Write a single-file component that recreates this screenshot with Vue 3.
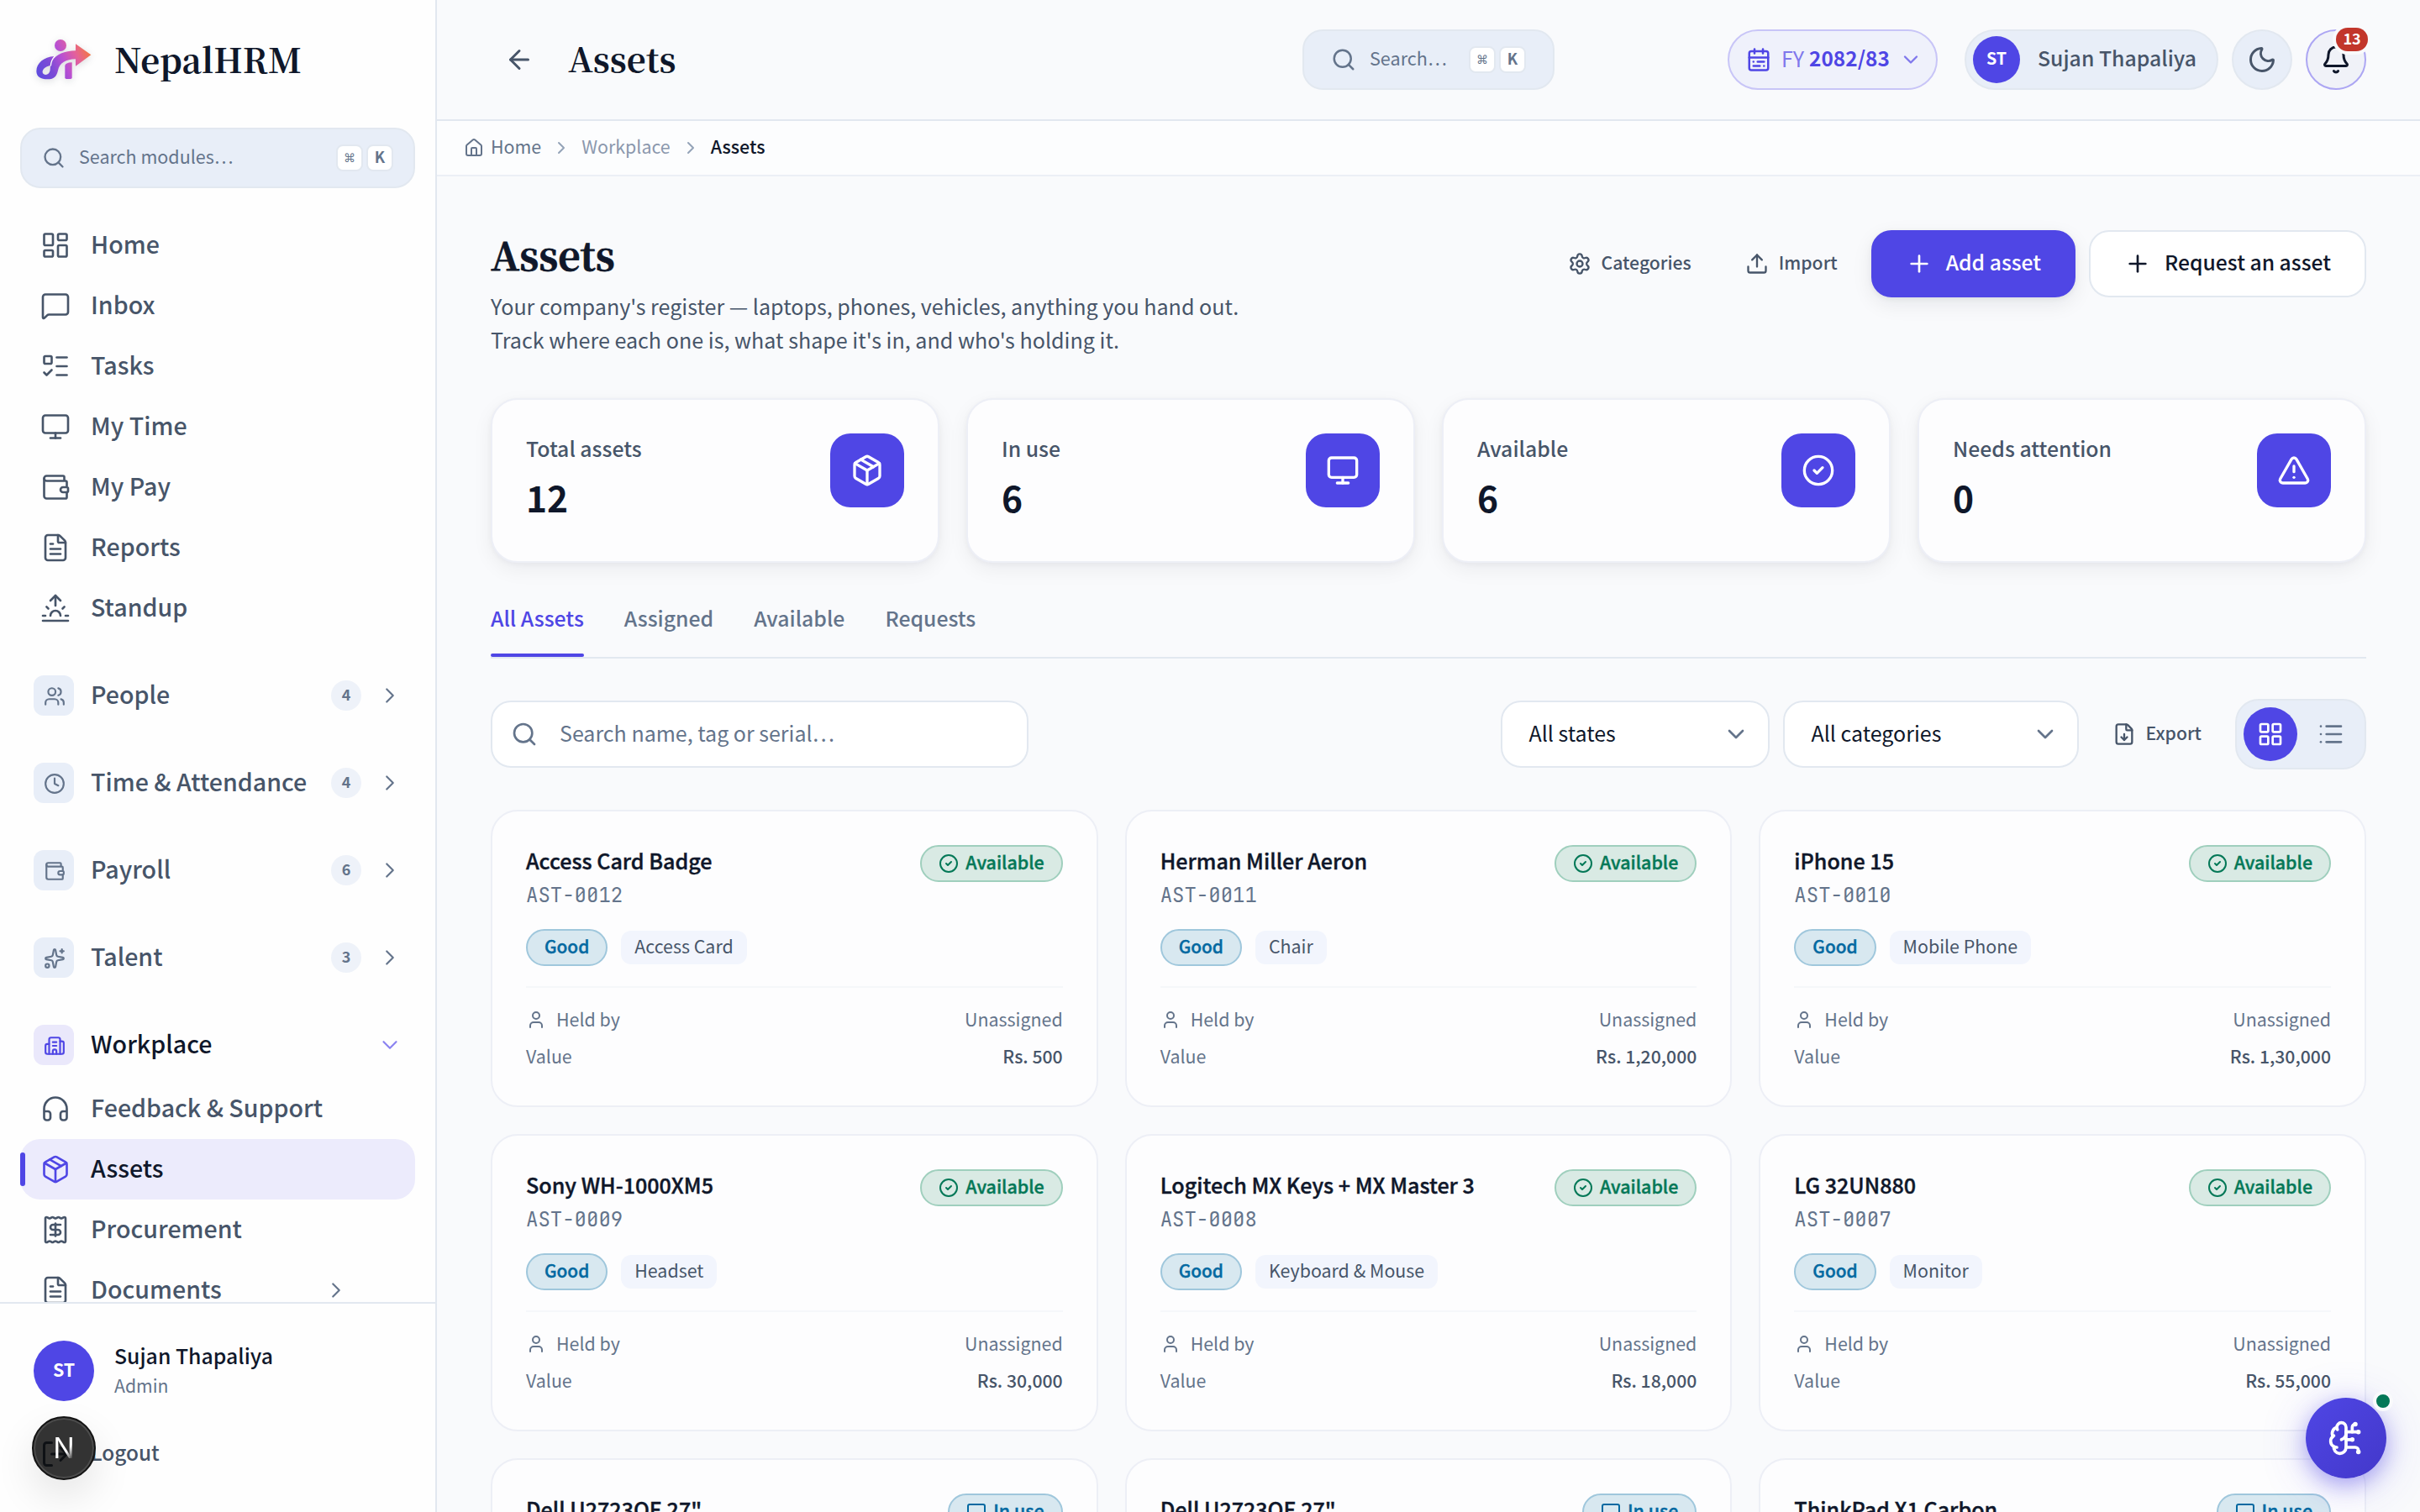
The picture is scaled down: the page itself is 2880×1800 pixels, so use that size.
<template>
  <div class="layout">
    <aside class="sidebar">
      <div class="brand">
        <svg class="logo" viewBox="30 28 216 168">
          <defs>
            <linearGradient id="logoFill" x1="40" y1="170" x2="235" y2="80" gradientUnits="userSpaceOnUse">
              <stop offset="0" stop-color="#5b4be0" />
              <stop offset="0.28" stop-color="#7a4bd6" />
              <stop offset="0.52" stop-color="#b84fd3" />
              <stop offset="0.75" stop-color="#e4619a" />
              <stop offset="1" stop-color="#f4793c" />
            </linearGradient>
          </defs>
          <circle cx="126" cy="58" r="21" fill="url(#logoFill)" />
          <path
            d="M104 97C66 99 40 122 40 150C40 170 56 179 79 179C105 179 113 166 117 147C123 120 145 108 180 107V132L235 92L180 53V77C140 77 110 92 97 112Z M91 130C71 133 60 145 62 155C65 166 80 166 86 155C91 146 88 138 91 130Z"
            fill="url(#logoFill)"
            fill-rule="evenodd"
          />
          <path d="M106 96C97 106 92 117 91 131" stroke="#fff" stroke-width="4" fill="none" />
          <path d="M142 131Q143 120 167 119V173Q167 178 162 178H147Q142 178 142 173Z" fill="url(#logoFill)" />
        </svg>
        <span class="brand-name">NepalHRM</span>
      </div>

      <div class="module-search">
        <svg class="icon" viewBox="0 0 24 24" v-html="icons.search"></svg>
        <span class="tx">Search modules…</span>
        <kbd class="cmd">⌘</kbd>
        <kbd><span class="tx">K</span></kbd>
      </div>

      <nav class="nav">
        <a v-for="item in mainNav" :key="item.label" class="nav-item">
          <svg class="icon" viewBox="0 0 24 24" v-html="icons[item.icon]"></svg>
          <span class="tx">{{ item.label }}</span>
        </a>

        <div v-for="group in groups" :key="group.label" class="group" :class="{ open: group.open }">
          <div class="group-head">
            <span class="tile">
              <svg class="icon" viewBox="0 0 24 24" v-html="icons[group.icon]"></svg>
            </span>
            <span class="tx label">{{ group.label }}</span>
            <span v-if="!group.open" class="count"><span class="tx">{{ group.count }}</span></span>
            <svg class="icon chev" viewBox="0 0 24 24" v-html="group.open ? icons.chevronDown : icons.chevronRight"></svg>
          </div>
          <a v-for="item in group.items" :key="item.label" class="nav-item" :class="{ active: item.active }">
            <svg class="icon" viewBox="0 0 24 24" v-html="icons[item.icon]"></svg>
            <span class="tx label">{{ item.label }}</span>
            <svg v-if="item.more" class="icon more" viewBox="0 0 24 24" v-html="icons.chevronRight"></svg>
          </a>
        </div>
      </nav>

      <div class="account">
        <div class="account-user">
          <span class="avatar"><span class="tx">ST</span></span>
          <div>
            <div class="account-name">Sujan Thapaliya</div>
            <div class="account-role">Admin</div>
          </div>
        </div>
        <div class="logout">
          <svg class="icon" viewBox="0 0 24 24" v-html="icons.logout"></svg>
          <span class="tx">Logout</span>
        </div>
      </div>
    </aside>

    <div class="content">
      <header class="topbar">
        <div class="topbar-left">
          <svg class="icon" viewBox="0 0 24 24" v-html="icons.arrowLeft"></svg>
          <span class="topbar-title">Assets</span>
        </div>
        <div class="top-search">
          <svg class="icon" viewBox="0 0 24 24" v-html="icons.search"></svg>
          <span class="tx">Search…</span>
          <kbd class="cmd">⌘</kbd>
          <kbd><span class="tx">K</span></kbd>
        </div>
        <div class="fiscal">
          <svg class="icon" viewBox="0 0 24 24" v-html="icons.calendar"></svg>
          <span class="tx fy">FY</span>
          <span class="tx year">2082/83</span>
          <svg class="icon chev" viewBox="0 0 24 24" v-html="icons.chevronDown"></svg>
        </div>
        <div class="user-pill">
          <span class="avatar small"><span class="tx">ST</span></span>
          <span class="tx">Sujan Thapaliya</span>
        </div>
        <div class="round">
          <svg class="icon" viewBox="0 0 24 24" v-html="icons.moon"></svg>
        </div>
        <div class="round bell">
          <svg class="icon" viewBox="0 0 24 24" v-html="icons.bell"></svg>
          <span class="bell-badge"><span class="tx">13</span></span>
        </div>
      </header>

      <div class="crumbs">
        <svg class="icon home" viewBox="0 0 24 24" v-html="icons.home"></svg>
        <span class="tx">Home</span>
        <svg class="icon sep" viewBox="0 0 24 24" v-html="icons.chevronRight"></svg>
        <span class="tx muted">Workplace</span>
        <svg class="icon sep" viewBox="0 0 24 24" v-html="icons.chevronRight"></svg>
        <span class="tx current">Assets</span>
      </div>

      <main class="page">
        <div class="page-head">
          <div class="page-intro">
            <h1>Assets</h1>
            <p>
              Your company's register — laptops, phones, vehicles, anything you hand out.<br />
              Track where each one is, what shape it's in, and who's holding it.
            </p>
          </div>
          <div class="actions">
            <button class="ghost">
              <svg class="icon" viewBox="0 0 24 24" v-html="icons.settings"></svg>
              <span class="tx">Categories</span>
            </button>
            <button class="ghost">
              <svg class="icon" viewBox="0 0 24 24" v-html="icons.upload"></svg>
              <span class="tx">Import</span>
            </button>
            <button class="btn primary">
              <svg class="icon" viewBox="0 0 24 24" v-html="icons.plus"></svg>
              <span class="tx">Add asset</span>
            </button>
            <button class="btn">
              <svg class="icon" viewBox="0 0 24 24" v-html="icons.plus"></svg>
              <span class="tx">Request an asset</span>
            </button>
          </div>
        </div>

        <div class="stats">
          <div v-for="stat in stats" :key="stat.label" class="stat">
            <div>
              <div class="stat-label"><span class="tx">{{ stat.label }}</span></div>
              <div class="stat-value"><span class="tx">{{ stat.value }}</span></div>
            </div>
            <span class="stat-tile">
              <svg class="icon" viewBox="0 0 24 24" v-html="icons[stat.icon]"></svg>
            </span>
          </div>
        </div>

        <div class="tabs">
          <span
            v-for="tab in tabs"
            :key="tab"
            class="tab"
            :class="{ selected: tab === activeTab }"
            @click="activeTab = tab"
          >
            <span class="tx">{{ tab }}</span>
          </span>
        </div>

        <div class="toolbar">
          <div class="field">
            <svg class="icon" viewBox="0 0 24 24" v-html="icons.search"></svg>
            <span class="tx">Search name, tag or serial…</span>
          </div>
          <div class="select states">
            <span class="tx">All states</span>
            <svg class="icon" viewBox="0 0 24 24" v-html="icons.chevronDown"></svg>
          </div>
          <div class="select categories">
            <span class="tx">All categories</span>
            <svg class="icon" viewBox="0 0 24 24" v-html="icons.chevronDown"></svg>
          </div>
          <button class="ghost">
            <svg class="icon" viewBox="0 0 24 24" v-html="icons.fileDown"></svg>
            <span class="tx">Export</span>
          </button>
          <div class="toggle">
            <span class="toggle-item on">
              <svg class="icon" viewBox="0 0 24 24" v-html="icons.grid"></svg>
            </span>
            <span class="toggle-item">
              <svg class="icon" viewBox="0 0 24 24" v-html="icons.list"></svg>
            </span>
          </div>
        </div>

        <div class="cards">
          <div v-for="(asset, index) in assets" :key="index" class="card">
            <div class="card-top">
              <div>
                <div class="card-name"><span class="tx">{{ asset.name }}</span></div>
                <div v-if="asset.tag" class="card-tag">{{ asset.tag }}</div>
              </div>
              <span class="status" :class="{ used: asset.used }">
                <svg class="icon" viewBox="0 0 24 24" v-html="asset.used ? icons.monitor : icons.check"></svg>
                <span class="tx">{{ asset.used ? 'In use' : 'Available' }}</span>
              </span>
            </div>
            <template v-if="asset.tag">
              <div class="card-chips">
                <span class="condition"><span class="tx">Good</span></span>
                <span class="category"><span class="tx">{{ asset.category }}</span></span>
              </div>
              <div class="card-rows">
                <div class="card-row">
                  <svg class="icon" viewBox="0 0 24 24" v-html="icons.user"></svg>
                  <span class="tx">Held by</span>
                  <span class="tx end">Unassigned</span>
                </div>
                <div class="card-row">
                  <span class="tx">Value</span>
                  <span class="tx end price">{{ asset.value }}</span>
                </div>
              </div>
            </template>
          </div>
        </div>
      </main>
    </div>

    <!-- floating buttons -->
    <div class="dev-badge"><span>N</span></div>
    <div class="assistant">
      <svg class="icon" viewBox="0 0 24 24" v-html="icons.brain"></svg>
      <span class="online"></span>
    </div>
  </div>
</template>

<script setup>
import { ref } from 'vue';

const file =
  '<path d="M6 22a2 2 0 0 1-2-2V4a2 2 0 0 1 2-2h8a2.4 2.4 0 0 1 1.704.706l3.588 3.588A2.4 2.4 0 0 1 20 8v12a2 2 0 0 1-2 2z"/><path d="M14 2v5a1 1 0 0 0 1 1h5"/>';

const icons = {
  search: '<circle cx="11" cy="11" r="8"/><path d="m21 21-4.34-4.34"/>',
  dashboard:
    '<rect width="7" height="9" x="3" y="3" rx="1"/><rect width="7" height="5" x="14" y="3" rx="1"/><rect width="7" height="9" x="14" y="12" rx="1"/><rect width="7" height="5" x="3" y="16" rx="1"/>',
  message:
    '<path d="M22 17a2 2 0 0 1-2 2H6.828a2 2 0 0 0-1.414.586l-2.202 2.202A.71.71 0 0 1 2 21.286V5a2 2 0 0 1 2-2h16a2 2 0 0 1 2 2z"/>',
  todo: '<path d="M13 5h8"/><path d="M13 12h8"/><path d="M13 19h8"/><path d="m3 17 2 2 4-4"/><rect x="3" y="4" width="6" height="6" rx="1"/>',
  monitor: '<rect width="20" height="14" x="2" y="3" rx="2"/><path d="M8 21h8"/><path d="M12 17v4"/>',
  wallet:
    '<path d="M19 7V4a1 1 0 0 0-1-1H5a2 2 0 0 0 0 4h15a1 1 0 0 1 1 1v4h-3a2 2 0 0 0 0 4h3a1 1 0 0 0 1-1v-2a1 1 0 0 0-1-1"/><path d="M3 5v14a2 2 0 0 0 2 2h15a1 1 0 0 0 1-1v-4"/>',
  fileText: file + '<path d="M10 9H8"/><path d="M16 13H8"/><path d="M16 17H8"/>',
  fileDown: file + '<path d="M12 18v-6"/><path d="m9 15 3 3 3-3"/>',
  sunrise:
    '<path d="M12 2v8"/><path d="m4.93 10.93 1.41 1.41"/><path d="M2 18h2"/><path d="M20 18h2"/><path d="m19.07 10.93-1.41 1.41"/><path d="M22 22H2"/><path d="m8 6 4-4 4 4"/><path d="M16 18a4 4 0 0 0-8 0"/>',
  users:
    '<path d="M16 21v-2a4 4 0 0 0-4-4H6a4 4 0 0 0-4 4v2"/><path d="M16 3.128a4 4 0 0 1 0 7.744"/><path d="M22 21v-2a4 4 0 0 0-3-3.87"/><circle cx="9" cy="7" r="4"/>',
  clock: '<circle cx="12" cy="12" r="10"/><path d="M12 6v6l4 2"/>',
  sparkles:
    '<path d="M11.017 2.814a1 1 0 0 1 1.966 0l1.051 5.558a2 2 0 0 0 1.594 1.594l5.558 1.051a1 1 0 0 1 0 1.966l-5.558 1.051a2 2 0 0 0-1.594 1.594l-1.051 5.558a1 1 0 0 1-1.966 0l-1.051-5.558a2 2 0 0 0-1.594-1.594l-5.558-1.051a1 1 0 0 1 0-1.966l5.558-1.051a2 2 0 0 0 1.594-1.594z"/><path d="M20 2v4"/><path d="M22 4h-4"/><circle cx="4" cy="20" r="2"/>',
  building:
    '<path d="M10 12h4"/><path d="M10 8h4"/><path d="M14 21v-3a2 2 0 0 0-4 0v3"/><path d="M6 10H4a2 2 0 0 0-2 2v7a2 2 0 0 0 2 2h16a2 2 0 0 0 2-2V9a2 2 0 0 0-2-2h-2"/><path d="M6 21V5a2 2 0 0 1 2-2h8a2 2 0 0 1 2 2v16"/>',
  headphones:
    '<path d="M3 14h3a2 2 0 0 1 2 2v3a2 2 0 0 1-2 2H5a2 2 0 0 1-2-2v-7a9 9 0 0 1 18 0v7a2 2 0 0 1-2 2h-1a2 2 0 0 1-2-2v-3a2 2 0 0 1 2-2h3"/>',
  package:
    '<path d="M11 21.73a2 2 0 0 0 2 0l7-4A2 2 0 0 0 21 16V8a2 2 0 0 0-1-1.73l-7-4a2 2 0 0 0-2 0l-7 4A2 2 0 0 0 3 8v8a2 2 0 0 0 1 1.73z"/><path d="M12 22V12"/><path d="M3.29 7 12 12l8.71-5"/><path d="m7.5 4.27 9 5.15"/>',
  receipt:
    '<path d="M4 3a1 1 0 0 1 1-1 1.3 1.3 0 0 1 .7.2l.933.6a1.3 1.3 0 0 0 1.4 0l.934-.6a1.3 1.3 0 0 1 1.4 0l.933.6a1.3 1.3 0 0 0 1.4 0l.933-.6a1.3 1.3 0 0 1 1.4 0l.934.6a1.3 1.3 0 0 0 1.4 0l.933-.6A1.3 1.3 0 0 1 19 2a1 1 0 0 1 1 1v18a1 1 0 0 1-1 1 1.3 1.3 0 0 1-.7-.2l-.933-.6a1.3 1.3 0 0 0-1.4 0l-.934.6a1.3 1.3 0 0 1-1.4 0l-.933-.6a1.3 1.3 0 0 0-1.4 0l-.933.6a1.3 1.3 0 0 1-1.4 0l-.934-.6a1.3 1.3 0 0 0-1.4 0l-.933.6a1.3 1.3 0 0 1-.7.2 1 1 0 0 1-1-1z"/><path d="M16 8h-6a2 2 0 1 0 0 4h4a2 2 0 1 1 0 4H8"/><path d="M12 17V7"/>',
  logout: '<path d="m16 17 5-5-5-5"/><path d="M21 12H9"/><path d="M9 21H5a2 2 0 0 1-2-2V5a2 2 0 0 1 2-2h4"/>',
  arrowLeft: '<path d="m12 19-7-7 7-7"/><path d="M19 12H5"/>',
  home: '<path d="M15 21v-8a1 1 0 0 0-1-1h-4a1 1 0 0 0-1 1v8"/><path d="M3 10a2 2 0 0 1 .709-1.528l7-6a2 2 0 0 1 2.582 0l7 6A2 2 0 0 1 21 10v9a2 2 0 0 1-2 2H5a2 2 0 0 1-2-2z"/>',
  chevronRight: '<path d="m9 18 6-6-6-6"/>',
  chevronDown: '<path d="m6 9 6 6 6-6"/>',
  calendar:
    '<rect width="18" height="18" x="3" y="4" rx="2"/><path d="M16 2v4"/><path d="M3 10h18"/><path d="M8 2v4"/><path d="M17 14h-6"/><path d="M13 18H7"/><path d="M7 14h.01"/><path d="M17 18h.01"/>',
  moon: '<path d="M20.985 12.486a9 9 0 1 1-9.473-9.472c.405-.022.617.46.402.803a6 6 0 0 0 8.268 8.268c.344-.215.825-.004.803.401"/>',
  bell: '<path d="M10.268 21a2 2 0 0 0 3.464 0"/><path d="M3.262 15.326A1 1 0 0 0 4 17h16a1 1 0 0 0 .74-1.673C19.41 13.956 18 12.499 18 8A6 6 0 0 0 6 8c0 4.499-1.411 5.956-2.738 7.326"/>',
  settings:
    '<path d="M9.671 4.136a2.34 2.34 0 0 1 4.659 0 2.34 2.34 0 0 0 3.319 1.915 2.34 2.34 0 0 1 2.33 4.033 2.34 2.34 0 0 0 0 3.831 2.34 2.34 0 0 1-2.33 4.033 2.34 2.34 0 0 0-3.319 1.915 2.34 2.34 0 0 1-4.659 0 2.34 2.34 0 0 0-3.32-1.915 2.34 2.34 0 0 1-2.33-4.033 2.34 2.34 0 0 0 0-3.831A2.34 2.34 0 0 1 6.35 6.051a2.34 2.34 0 0 0 3.319-1.915"/><circle cx="12" cy="12" r="3"/>',
  upload: '<path d="M12 3v12"/><path d="m17 8-5-5-5 5"/><path d="M21 15v4a2 2 0 0 1-2 2H5a2 2 0 0 1-2-2v-4"/>',
  plus: '<path d="M5 12h14"/><path d="M12 5v14"/>',
  check: '<circle cx="12" cy="12" r="10"/><path d="m9 12 2 2 4-4"/>',
  alert:
    '<path d="m21.73 18-8-14a2 2 0 0 0-3.48 0l-8 14A2 2 0 0 0 4 21h16a2 2 0 0 0 1.73-3"/><path d="M12 9v4"/><path d="M12 17h.01"/>',
  grid: '<rect width="7" height="7" x="3" y="3" rx="1"/><rect width="7" height="7" x="14" y="3" rx="1"/><rect width="7" height="7" x="14" y="14" rx="1"/><rect width="7" height="7" x="3" y="14" rx="1"/>',
  list: '<path d="M3 5h.01"/><path d="M3 12h.01"/><path d="M3 19h.01"/><path d="M8 5h13"/><path d="M8 12h13"/><path d="M8 19h13"/>',
  user: '<path d="M19 21v-2a4 4 0 0 0-4-4H9a4 4 0 0 0-4 4v2"/><circle cx="12" cy="7" r="4"/>',
  brain:
    '<path d="M12 5a3 3 0 1 0-5.997.125 4 4 0 0 0-2.526 5.77 4 4 0 0 0 .556 6.588A4 4 0 1 0 12 18Z"/><path d="M9 13a4.5 4.5 0 0 0 3-4"/><path d="M6.003 5.125A3 3 0 0 0 6.401 6.5"/><path d="M3.477 10.896a4 4 0 0 1 .585-.396"/><path d="M6 18a4 4 0 0 1-1.967-.516"/><path d="M12 13h4"/><path d="M12 18h6a2 2 0 0 1 2 2v1"/><path d="M12 8h8"/><path d="M16 8V5a2 2 0 0 1 2-2"/><circle cx="16" cy="13" r=".5"/><circle cx="18" cy="3" r=".5"/><circle cx="20" cy="21" r=".5"/><circle cx="20" cy="8" r=".5"/>',
};

const mainNav = [
  { label: 'Home', icon: 'dashboard' },
  { label: 'Inbox', icon: 'message' },
  { label: 'Tasks', icon: 'todo' },
  { label: 'My Time', icon: 'monitor' },
  { label: 'My Pay', icon: 'wallet' },
  { label: 'Reports', icon: 'fileText' },
  { label: 'Standup', icon: 'sunrise' },
];

const groups = [
  { label: 'People', icon: 'users', count: 4 },
  { label: 'Time & Attendance', icon: 'clock', count: 4 },
  { label: 'Payroll', icon: 'wallet', count: 6 },
  { label: 'Talent', icon: 'sparkles', count: 3 },
  {
    label: 'Workplace',
    icon: 'building',
    open: true,
    items: [
      { label: 'Feedback & Support', icon: 'headphones' },
      { label: 'Assets', icon: 'package', active: true },
      { label: 'Procurement', icon: 'receipt' },
      { label: 'Documents', icon: 'fileText', more: true },
    ],
  },
];

const stats = [
  { label: 'Total assets', value: 12, icon: 'package' },
  { label: 'In use', value: 6, icon: 'monitor' },
  { label: 'Available', value: 6, icon: 'check' },
  { label: 'Needs attention', value: 0, icon: 'alert' },
];

const tabs = ['All Assets', 'Assigned', 'Available', 'Requests'];
const activeTab = ref('All Assets');

const assets = [
  { name: 'Access Card Badge', tag: 'AST-0012', category: 'Access Card', value: 'Rs. 500' },
  { name: 'Herman Miller Aeron', tag: 'AST-0011', category: 'Chair', value: 'Rs. 1,20,000' },
  { name: 'iPhone 15', tag: 'AST-0010', category: 'Mobile Phone', value: 'Rs. 1,30,000' },
  { name: 'Sony WH-1000XM5', tag: 'AST-0009', category: 'Headset', value: 'Rs. 30,000' },
  { name: 'Logitech MX Keys + MX Master 3', tag: 'AST-0008', category: 'Keyboard & Mouse', value: 'Rs. 18,000' },
  { name: 'LG 32UN880', tag: 'AST-0007', category: 'Monitor', value: 'Rs. 55,000' },
  { name: 'Dell U2723QE 27"', used: true },
  { name: 'Dell U2723QE 27"', used: true },
  { name: 'ThinkPad X1 Carbon', used: true },
];
</script>

<style>
body {
  margin: 0;
  background: #f9fafc;
}
</style>

<style scoped>
.layout {
  position: relative;
  display: grid;
  grid-template-columns: 520px 1fr;
  width: 2880px;
  height: 1800px;
  overflow: hidden;
  background: #f9fafc;
  color: #0f172a;
  font-family: 'Noto Sans CJK SC', 'Noto Sans', sans-serif;
  font-size: 25px;
}

.layout * {
  box-sizing: border-box;
}

/* the font sits low in its line box, this lifts it to the optical centre */
.tx {
  display: block;
  line-height: 1.2;
  padding-bottom: 0.18em;
  white-space: nowrap;
}

.nav .tx,
.stat-label .tx,
.tab .tx,
.card-row .tx {
  padding-bottom: 0.11em;
}

.icon {
  display: block;
  flex: none;
  fill: none;
  stroke: currentColor;
  stroke-width: 2;
  stroke-linecap: round;
  stroke-linejoin: round;
}

button {
  font: inherit;
  border: none;
  background: none;
}

kbd {
  display: flex;
  align-items: center;
  justify-content: center;
  width: 32px;
  height: 32px;
  border: 2px solid #e2e8f0;
  border-radius: 8px;
  background: #fff;
  color: #64748b;
  font-family: inherit;
  font-size: 18px;
  font-weight: 700;
}

kbd.cmd {
  margin-left: auto;
  margin-right: 4px;
  font-family: 'DejaVu Sans', sans-serif;
  font-size: 14px;
  font-weight: 400;
}

/* sidebar */
.sidebar {
  display: flex;
  flex-direction: column;
  height: 1800px;
  border-right: 2px solid #e2e8f0;
  background: #fefefe;
}

.brand {
  display: flex;
  align-items: center;
  gap: 24px;
  height: 152px;
  padding: 0 0 8px 40px;
}

.logo {
  width: 72px;
  height: 56px;
  filter: drop-shadow(0 2px 4px rgba(15, 23, 42, 0.15));
}

.brand-name {
  padding-bottom: 5px;
  font-family: 'Noto Serif CJK SC', 'Noto Serif', serif;
  font-size: 40px;
  font-weight: 700;
  line-height: 1.2;
}

.module-search {
  display: flex;
  align-items: center;
  flex: none;
  height: 72px;
  margin: 0 24px 32px;
  padding: 0 24px;
  border: 2px solid #e2e8f0;
  border-radius: 24px;
  background: #e8eef8;
  color: #64748b;
  font-size: 21.5px;
}

.module-search .icon {
  width: 28px;
  height: 28px;
  margin-right: 16px;
}

.nav {
  flex: 1;
  min-height: 0;
  overflow: hidden;
  padding: 0 24px;
  color: #475569;
  font-size: 28.6px;
  font-weight: 500;
}

.nav-item {
  position: relative;
  display: flex;
  align-items: center;
  gap: 24px;
  height: 72px;
  padding: 0 24px;
  border-radius: 24px;
}

.nav-item > .icon {
  width: 36px;
  height: 36px;
  stroke-width: 1.75;
}

.nav-item .label {
  flex: 1;
}

.nav-item > .more {
  width: 30px;
  height: 30px;
  margin-right: 55px;
  color: #64748b;
}

.nav-item.active {
  background: #ecebfc;
  color: #0f172a;
}

.nav-item.active .icon {
  color: #4f46e5;
}

.nav-item.active::before {
  content: '';
  position: absolute;
  left: 0;
  top: 16px;
  width: 6px;
  height: 40px;
  border-radius: 3px;
  background: #4f46e5;
}

.group {
  margin-top: 32px;
}

.group-head {
  display: flex;
  align-items: center;
  height: 72px;
  padding: 0 15px 0 16px;
}

.group.open .group-head {
  margin-bottom: 4px;
  color: #0f172a;
}

.tile {
  display: flex;
  align-items: center;
  justify-content: center;
  width: 48px;
  height: 48px;
  margin-right: 20px;
  padding: 2px 0 0 2px;
  border-radius: 12px;
  background: #e8eef8;
  color: #64748b;
}

.tile .icon {
  width: 26px;
  height: 26px;
}

.group.open .tile {
  background: #eae8fb;
  color: #4f46e5;
}

.group-head .label {
  flex: 1;
}

.count {
  display: flex;
  align-items: center;
  justify-content: center;
  width: 36px;
  height: 36px;
  margin-right: 19px;
  border-radius: 18px;
  background: #eef2f9;
  color: #64748b;
  font-size: 18px;
  font-weight: 700;
}

.chev {
  width: 30px;
  height: 30px;
  stroke-width: 1.75;
  color: #64748b;
}

.group.open .chev {
  color: #8b83f0;
}

.account {
  flex: none;
  height: 250px;
  padding: 44px 40px;
  border-top: 2px solid #e2e8f0;
}

.account-user {
  display: flex;
  gap: 24px;
}

.avatar {
  display: flex;
  align-items: center;
  justify-content: center;
  flex: none;
  width: 72px;
  height: 72px;
  border-radius: 50%;
  background: #4f46e5;
  color: #fff;
  font-size: 21.4px;
  font-weight: 700;
}

.avatar.small {
  width: 56px;
  height: 56px;
  margin-right: 21px;
  font-size: 19.6px;
}

.account-name {
  font-size: 24.8px;
  font-weight: 500;
  line-height: 35px;
}

.account-role {
  color: #64748b;
  font-size: 21.2px;
  line-height: 35px;
}

.logout {
  display: flex;
  align-items: center;
  gap: 24px;
  height: 62px;
  margin-top: 32px;
  padding-left: 8px;
  color: #475569;
  font-size: 24.4px;
  font-weight: 500;
}

.logout .icon {
  width: 36px;
  height: 36px;
}

/* top bar */
.content {
  min-width: 0;
}

.topbar {
  display: flex;
  align-items: center;
  height: 144px;
  padding: 0 64px 0 80px;
  border-bottom: 2px solid #e2e8f0;
}

.topbar-left {
  display: flex;
  align-items: center;
  gap: 40px;
  width: 950px;
  color: #475569;
}

.topbar-left .icon {
  width: 36px;
  height: 36px;
}

.topbar-title {
  padding-bottom: 5px;
  color: #0f172a;
  font-family: 'Noto Serif CJK SC', 'Noto Serif', serif;
  font-size: 40px;
  font-weight: 700;
  line-height: 1.2;
}

.top-search {
  display: flex;
  align-items: center;
  width: 300px;
  height: 72px;
  margin-right: auto;
  padding: 0 32px;
  border: 2px solid #e2e8f0;
  border-radius: 24px;
  background: #e8eef8;
  color: #64748b;
  font-size: 21.6px;
}

.top-search .icon {
  width: 30px;
  height: 30px;
  margin-right: 16px;
}

.fiscal {
  display: flex;
  align-items: center;
  width: 250px;
  height: 72px;
  margin-right: 32px;
  padding: 0 16px 0 20px;
  border: 2px solid #c8c5f7;
  border-radius: 36px;
  background: #eff1fb;
  color: #4f46e5;
}

.fiscal .icon {
  width: 30px;
  height: 30px;
}

.fiscal .fy {
  margin-left: 12px;
  color: #8078ec;
}

.fiscal .year {
  margin-left: 6px;
  font-size: 24.4px;
  font-weight: 700;
}

.fiscal .chev {
  width: 28px;
  height: 28px;
  margin-left: auto;
  color: #8078ec;
  stroke-width: 2;
}

.user-pill {
  display: flex;
  align-items: center;
  width: 302px;
  height: 72px;
  padding: 0 8px;
  border: 2px solid #e2e8f0;
  border-radius: 36px;
  background: #e8eef8;
  color: #475569;
  font-size: 24.8px;
  font-weight: 500;
}

.round {
  position: relative;
  display: flex;
  align-items: center;
  justify-content: center;
  width: 72px;
  height: 72px;
  margin-left: 16px;
  border: 2px solid #e2e8f0;
  border-radius: 50%;
  background: #e8eef8;
  color: #475569;
}

.round .icon {
  width: 36px;
  height: 36px;
}

.bell {
  border-color: #aca6f3;
  background: #f0f2f8;
  color: #0f172a;
}

.bell-badge {
  position: absolute;
  left: 34px;
  top: -4px;
  display: flex;
  align-items: center;
  justify-content: center;
  width: 38px;
  height: 28px;
  border-radius: 14px;
  background: #c2362b;
  box-shadow: 0 0 0 4px #f9fafc;
  color: #fff;
  font-size: 18px;
  font-weight: 700;
}

.crumbs {
  display: flex;
  align-items: center;
  gap: 12px;
  height: 66px;
  padding: 0 32px 1px;
  border-bottom: 2px solid #eceff6;
  background: #fcfdfe;
  color: #64748b;
  font-size: 21.4px;
}

.crumbs .icon {
  width: 24px;
  height: 24px;
}

.crumbs .home {
  margin-right: -4px;
}

.crumbs .sep {
  color: #94a3b8;
}

.crumbs .muted {
  color: #8b98ad;
}

.crumbs .current {
  color: #0f172a;
  font-weight: 500;
}

/* page */
.page {
  padding: 64px 64px 0;
}

.page-head {
  display: flex;
  justify-content: space-between;
  align-items: flex-start;
  height: 200px;
}

.page-intro h1 {
  margin: 0;
  font-family: 'Noto Serif CJK SC', 'Noto Serif', serif;
  font-size: 46px;
  font-weight: 700;
  line-height: 57px;
  -webkit-text-stroke: 0.8px currentColor;
}

.page-intro p {
  margin: 13px 0 0;
  color: #475569;
  font-size: 25.1px;
  line-height: 40px;
}

.actions {
  display: flex;
  gap: 16px;
}

.ghost {
  display: flex;
  align-items: center;
  gap: 12px;
  height: 80px;
  padding: 0 24px;
  color: #475569;
  font-size: 21.2px;
  font-weight: 500;
}

.ghost .icon {
  width: 28px;
  height: 28px;
}

.btn {
  display: flex;
  align-items: center;
  gap: 16px;
  height: 80px;
  padding: 0 40px;
  border: 2px solid #e2e8f0;
  border-radius: 24px;
  background: #fff;
  color: #0f172a;
  font-size: 24.7px;
  font-weight: 500;
}

.btn.primary {
  padding: 0 39px;
  border-color: #4f46e5;
  background: #4f46e5;
  box-shadow: 0 8px 24px rgba(15, 23, 42, 0.08), 0 2px 6px rgba(15, 23, 42, 0.06);
  color: #fff;
}

.btn .icon {
  width: 32px;
  height: 32px;
}

.stats {
  display: grid;
  grid-template-columns: repeat(4, 1fr);
  gap: 32px;
}

.stat {
  display: flex;
  justify-content: space-between;
  height: 196px;
  padding: 40px;
  border: 2px solid #edeff6;
  border-radius: 32px;
  background: #fdfdfe;
  box-shadow: 0 8px 24px rgba(15, 23, 42, 0.06), 0 2px 6px rgba(15, 23, 42, 0.04);
}

.stat-label {
  display: flex;
  align-items: center;
  height: 38px;
  color: #475569;
  font-size: 24.8px;
  font-weight: 500;
}

.stat-value {
  display: flex;
  align-items: center;
  height: 56px;
  margin-top: 13px;
  font-size: 42.5px;
  font-weight: 700;
}

.stat-tile {
  display: flex;
  align-items: center;
  justify-content: center;
  width: 88px;
  height: 88px;
  border-radius: 24px;
  background: #4f46e5;
  color: #fff;
}

.stat-tile .icon {
  width: 40px;
  height: 40px;
}

.tabs {
  display: flex;
  gap: 48px;
  height: 92px;
  margin-top: 22px;
  border-bottom: 2px solid #e2e8f0;
}

.tab {
  position: relative;
  display: flex;
  align-items: center;
  color: #64748b;
  font-size: 24.8px;
  font-weight: 500;
}

.tab.selected {
  color: #4f46e5;
}

.tab.selected::after {
  content: '';
  position: absolute;
  left: 0;
  right: 0;
  bottom: 0;
  height: 4px;
  border-radius: 2px;
  background: #4f46e5;
}

.toolbar {
  display: flex;
  align-items: center;
  gap: 16px;
  height: 84px;
  margin: 48px 0;
}

.field,
.select {
  display: flex;
  align-items: center;
  height: 80px;
  border: 2px solid #e2e8f0;
  border-radius: 24px;
  background: #fff;
}

.field {
  width: 640px;
  margin-right: auto;
  padding-left: 22px;
  color: #64748b;
}

.field .icon {
  width: 32px;
  height: 32px;
  margin-right: 26px;
}

.select {
  justify-content: space-between;
  padding: 0 22px 0 32px;
}

.select .icon {
  width: 32px;
  height: 32px;
  color: #64748b;
}

.states {
  width: 320px;
}

.categories {
  width: 352px;
}

.toggle {
  display: flex;
  gap: 8px;
  padding: 8px;
  border: 2px solid #e2e8f0;
  border-radius: 28px;
  background: #e8eef8;
}

.toggle-item {
  display: flex;
  align-items: center;
  justify-content: center;
  width: 64px;
  height: 64px;
  border-radius: 50%;
  color: #64748b;
}

.toggle-item.on {
  background: #4f46e5;
  color: #fff;
}

.toggle-item .icon {
  width: 32px;
  height: 32px;
}

/* asset cards */
.cards {
  display: grid;
  grid-template-columns: repeat(3, 1fr);
  gap: 32px;
}

.card {
  height: 354px;
  padding: 40px;
  border: 2px solid #edeff6;
  border-radius: 32px;
  background: #fdfdfe;
}

.card-top {
  display: flex;
  justify-content: space-between;
  align-items: flex-start;
  height: 100px;
}

.card-name {
  display: flex;
  align-items: center;
  height: 40px;
  font-size: 25.1px;
  font-weight: 500;
  -webkit-text-stroke: 0.4px currentColor;
}

.card-tag {
  color: #64748b;
  font-family: 'JetBrains Mono', 'DejaVu Sans Mono', monospace;
  font-size: 24px;
  font-variant-numeric: slashed-zero;
  line-height: 40px;
}

.status,
.condition {
  display: flex;
  align-items: center;
  gap: 8px;
  height: 44px;
  padding: 0 20px;
  border: 2px solid #9fcfbd;
  border-radius: 22px;
  background: #d9eae4;
  color: #047857;
  font-size: 21.4px;
  font-weight: 500;
  -webkit-text-stroke: 0.4px currentColor;
}

.status .icon {
  width: 24px;
  height: 24px;
}

.status.used,
.condition {
  border-color: #9fc7dc;
  background: #d8e8f0;
  color: #0369a1;
}

.condition {
  font-size: 20.8px;
}

.card-chips {
  display: flex;
  align-items: center;
  gap: 16px;
  height: 44px;
}

.category {
  display: flex;
  align-items: center;
  height: 40px;
  padding: 0 16px;
  border-radius: 12px;
  background: #f2f5fd;
  color: #475569;
  font-size: 21.4px;
}

.card-rows {
  display: grid;
  gap: 8px;
  margin-top: 24px;
  padding-top: 20px;
  border-top: 2px solid #f5f7fa;
}

.card-row {
  display: flex;
  align-items: center;
  height: 36px;
  color: #64748b;
  font-size: 21.4px;
}

.card-row .icon {
  width: 24px;
  height: 24px;
  margin-right: 12px;
}

.card-row .end {
  margin-left: auto;
}

.card-row .price {
  color: #475569;
  font-size: 21.2px;
  font-weight: 500;
}

/* floating */
.dev-badge {
  position: absolute;
  left: 38px;
  top: 1686px;
  display: flex;
  align-items: center;
  justify-content: center;
  width: 76px;
  height: 76px;
  border: 2px solid #141414;
  border-radius: 50%;
  background: rgba(0, 0, 0, 0.8);
  box-shadow: inset 0 0 0 2px #4c4c4c, 0 20px 48px rgba(0, 0, 0, 0.1);
}

.dev-badge span {
  background: linear-gradient(125deg, #fff 62%, rgba(255, 255, 255, 0.1) 85%);
  background-clip: text;
  color: transparent;
  font-family: Inter, sans-serif;
  font-size: 34px;
  line-height: 36px;
}

.assistant {
  position: absolute;
  right: 40px;
  bottom: 40px;
  display: flex;
  align-items: center;
  justify-content: center;
  width: 96px;
  height: 96px;
  border-radius: 50%;
  background: linear-gradient(135deg, #4f46e5, #4338ca);
  box-shadow: 0 8px 24px rgba(79, 70, 229, 0.4), 0 8px 56px rgba(79, 70, 229, 0.22);
  color: #fff;
}

.assistant .icon {
  width: 44px;
  height: 44px;
}

.online {
  position: absolute;
  right: -8px;
  top: -8px;
  width: 24px;
  height: 24px;
  border: 4px solid #f9fafc;
  border-radius: 50%;
  background: #047857;
}
</style>
